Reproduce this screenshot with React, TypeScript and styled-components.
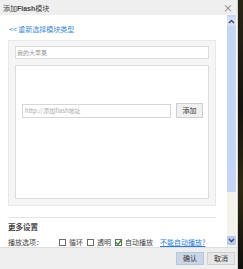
import React from "react";
import styled, { createGlobalStyle } from "styled-components";

const GlobalStyle = createGlobalStyle`
    html, body {
        margin: 0;
        padding: 0;
        background: #1b1a16;
        overflow: hidden;
    }
    * { box-sizing: border-box; }
`;

const FONT = `"Noto Sans CJK SC", "Liberation Sans", sans-serif`;

const Chevron = ({ up }: { up?: boolean }) => (
    <svg width="7" height="5" viewBox="0 0 7 5">
        <path
            d={up ? "M1 4 L3.5 1.5 L6 4" : "M1 1 L3.5 3.5 L6 1"}
            fill="none"
            stroke="#3a4a6a"
            strokeWidth="1.4"
        />
    </svg>
);

const Check = ({ checked }: { checked?: boolean }) => (
    <StyledBox>
        {checked && (
            <svg width="7" height="7" viewBox="0 0 7 7">
                <path d="M1 3.5 L3 5.5 L6.5 1" fill="none" stroke="#2f8f2f" strokeWidth="1.3" />
            </svg>
        )}
    </StyledBox>
);

const App = () => {
    return (
        <StyledPage>
            <GlobalStyle />
            <StyledDialog>
                <StyledTitleBar>
                    <StyledTitle>添加<b>Flash</b>模块</StyledTitle>
                    <StyledClose>×</StyledClose>
                </StyledTitleBar>
                <StyledBody>
                    <StyledContent>
                        <StyledBackLink>&lt;&lt; 重新选择模块类型</StyledBackLink>
                        <StyledPanel>
                            <StyledNameInput>我的大苹果</StyledNameInput>
                            <StyledFlashBox>
                                <StyledUrlRow>
                                    <StyledUrlInput>http://添加flash地址</StyledUrlInput>
                                    <StyledButton>添加</StyledButton>
                                </StyledUrlRow>
                            </StyledFlashBox>
                        </StyledPanel>
                        <StyledDivider />
                        <StyledSectionTitle>更多设置</StyledSectionTitle>
                        <StyledOptions>
                            <StyledLabel>播放选项：</StyledLabel>
                            <StyledOption><Check />循环</StyledOption>
                            <StyledOption><Check />透明</StyledOption>
                            <StyledOption><Check checked />自动播放</StyledOption>
                            <StyledHelpLink>不能自动播放?</StyledHelpLink>
                        </StyledOptions>
                    </StyledContent>
                    <StyledScrollbar>
                        <StyledThumb>
                            <StyledArrow><Chevron up /></StyledArrow>
                        </StyledThumb>
                        <StyledTrack />
                        <StyledArrow $down><Chevron /></StyledArrow>
                    </StyledScrollbar>
                </StyledBody>
                <StyledFooter>
                    <StyledFooterBtn $primary>确认</StyledFooterBtn>
                    <StyledFooterBtn>取消</StyledFooterBtn>
                </StyledFooter>
            </StyledDialog>
            <StyledEdge />
        </StyledPage>
    );
};

const StyledPage = styled.div`
    display: flex;
    width: 243px;
    height: 269px;
    font-family: ${FONT};
`;

const StyledDialog = styled.div`
    width: 238px;
    height: 269px;
    display: flex;
    flex-direction: column;
    background: #fff;
    border-right: 1px solid #cfcfcf;
`;

const StyledEdge = styled.div`
    flex: 1;
    background: linear-gradient(180deg, #2a2616 0%, #14130e 40%, #302a12 70%, #0f0f0c 100%);
`;

const StyledTitleBar = styled.div`
    height: 15px;
    flex-shrink: 0;
    display: flex;
    align-items: center;
    justify-content: space-between;
    padding: 0 4px 0 3px;
    background: #efefef;
`;

const StyledTitle = styled.span`
    font-size: 7px;
    color: #444;
    b { font-weight: 700; font-family: "Liberation Sans", sans-serif; }
`;

const StyledClose = styled.span`
    font-size: 10px;
    color: #777;
    line-height: 1;
`;

const StyledBody = styled.div`
    flex: 1;
    display: flex;
    min-height: 0;
`;

const StyledContent = styled.div`
    flex: 1;
    padding: 9px 11px 0 8px;
    display: flex;
    flex-direction: column;
`;

const StyledBackLink = styled.div`
    font-size: 7px;
    line-height: 10px;
    color: #3b8bd6;
    padding-left: 1px;
`;

const StyledPanel = styled.div`
    margin-top: 6px;
    height: 167px;
    background: #f5f5f5;
    border: 1px solid #e8e8e8;
    padding: 5px 6px 6px;
    display: flex;
    flex-direction: column;
    gap: 6px;
`;

const StyledNameInput = styled.div`
    height: 13px;
    background: #fff;
    border: 1px solid #dcdcdc;
    font-size: 6px;
    line-height: 11px;
    color: #999;
    padding-left: 1px;
`;

const StyledFlashBox = styled.div`
    flex: 1;
    background: #fff;
    border: 1px solid #dcdcdc;
    padding: 37px 5px 0 6px;
`;

const StyledUrlRow = styled.div`
    display: flex;
    align-items: center;
    gap: 5px;
`;

const StyledUrlInput = styled.div`
    width: 149px;
    height: 14px;
    border: 1px solid #d6d6d6;
    font-size: 6px;
    line-height: 12px;
    color: #aaa;
    padding-left: 2px;
`;

const StyledButton = styled.div`
    width: 27px;
    height: 15px;
    background: #f0f0f0;
    border: 1px solid #cfcfcf;
    font-size: 7px;
    line-height: 13px;
    text-align: center;
    color: #333;
`;

const StyledDivider = styled.div`
    margin-top: 11px;
    border-top: 1px solid #e4e4e4;
`;

const StyledSectionTitle = styled.div`
    margin-top: 4px;
    font-size: 7.5px;
    line-height: 10px;
    font-weight: 700;
    color: #444;
`;

const StyledOptions = styled.div`
    margin-top: 5px;
    display: flex;
    align-items: center;
    font-size: 7px;
    line-height: 10px;
    color: #444;
`;

const StyledLabel = styled.span`
    width: 51px;
`;

const StyledOption = styled.span`
    display: flex;
    align-items: center;
    gap: 3px;
    margin-right: 4px;
`;

const StyledBox = styled.span`
    width: 7px;
    height: 7px;
    border: 1px solid #6a6a6a;
    background: #fff;
    display: flex;
    align-items: center;
    justify-content: center;
    svg { flex-shrink: 0; }
`;

const StyledHelpLink = styled.span`
    margin-left: 3px;
    color: #2a7fd4;
    text-decoration: underline;
`;

const StyledScrollbar = styled.div`
    width: 10px;
    display: flex;
    flex-direction: column;
    background: #f3f3ec;
    margin-right: 1px;
`;

const StyledThumb = styled.div`
    height: 177px;
    background: #c5d5f5;
`;

const StyledTrack = styled.div`
    flex: 1;
`;

const StyledArrow = styled.div<{ $down?: boolean }>`
    height: 9px;
    margin: ${(p) => (p.$down ? "0 0 2px" : "2px 0 0")};
    display: flex;
    align-items: center;
    justify-content: center;
    background: ${(p) => (p.$down ? "#b9c9ee" : "#d5e0f8")};
    border-radius: 1px;
`;

const StyledFooter = styled.div`
    height: 22px;
    flex-shrink: 0;
    display: flex;
    align-items: center;
    justify-content: flex-end;
    gap: 3px;
    padding: 0 2px 0 0;
    background: #efefef;
    border-top: 1px solid #dedede;
`;

const StyledFooterBtn = styled.div<{ $primary?: boolean }>`
    width: 28px;
    height: 13px;
    font-size: 7px;
    line-height: 11px;
    text-align: center;
    color: #333;
    background: ${(p) => (p.$primary ? "#c9d6e8" : "#e6e6e6")};
    border: 1px solid ${(p) => (p.$primary ? "#b8c6da" : "#d0d0d0")};
`;

export default App
